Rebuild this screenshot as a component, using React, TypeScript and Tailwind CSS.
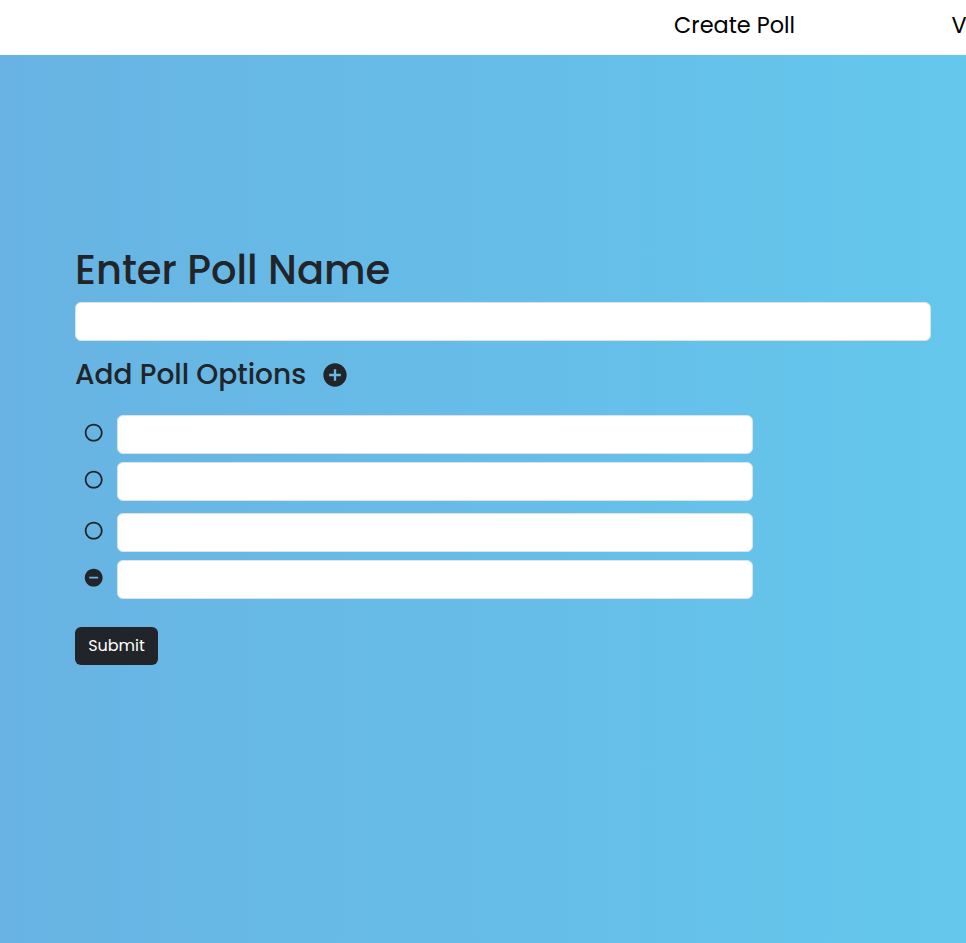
import { MdAddCircle, MdRemoveCircle, MdRadioButtonUnchecked } from "react-icons/md";

const field = "h-[39px] rounded-md border border-[#dee2e6] bg-white px-3 outline-none";

function OptionRow({ removable = false }: { removable?: boolean }) {
  return (
    <div className="flex">
      <div className="ml-[8px] mr-[12.6px] mt-[7px] size-[21.4px]">
        {removable ? <MdRemoveCircle size={21.4} /> : <MdRadioButtonUnchecked size={21.4} />}
      </div>
      <input className={`${field} w-[636px]`} />
    </div>
  );
}

export default function App() {
  return (
    <div className="flex h-[943px] w-[966px] flex-col overflow-hidden bg-white font-['Poppins','Inter',sans-serif] text-[#212529]">
      <nav className="flex h-[55px] shrink-0 whitespace-nowrap pl-[674px] pt-[9px] text-[22.4px] leading-[33px] text-black">
        <span className="w-[277.5px] shrink-0">Create Poll</span>
        <span className="shrink-0">V</span>
      </nav>
      <main className="h-[888px] bg-linear-to-r from-[#68b3e3] to-[#64c7ec] pl-[75px] pt-[191px]">
        <h1 className="h-[56px] whitespace-nowrap text-[40px] font-medium leading-[48px]">Enter Poll Name</h1>
        <input className={`${field} block w-[856px]`} />
        <div className="mt-[17px] flex h-[34px] items-center">
          <h3 className="w-[245.5px] whitespace-nowrap text-[28px] font-medium leading-[34px]">Add Poll Options</h3>
          <MdAddCircle size={28} />
        </div>
        <div className="mt-[23px] flex flex-col gap-3">
          <div className="flex flex-col gap-2">
            <OptionRow />
            <OptionRow />
          </div>
          <div className="flex flex-col gap-2">
            <OptionRow />
            <OptionRow removable />
          </div>
        </div>
        <button className="mt-[28px] block h-[38px] w-[83px] rounded-md bg-[#212529] text-base text-white">Submit</button>
      </main>
    </div>
  );
}
